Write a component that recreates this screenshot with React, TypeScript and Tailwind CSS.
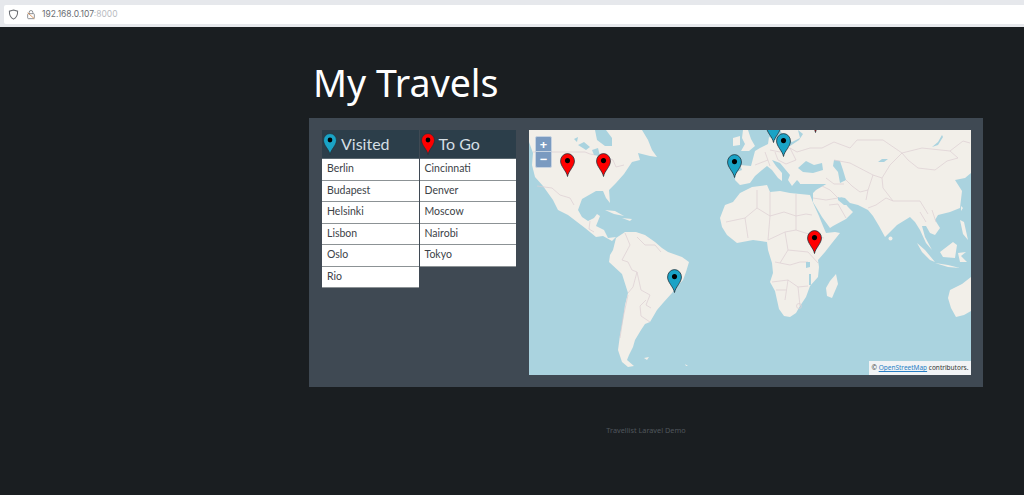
const visited = ["Berlin", "Budapest", "Helsinki", "Lisbon", "Oslo", "Rio"];
const toGo = ["Cincinnati", "Denver", "Moscow", "Nairobi", "Tokyo"];

// tip position in map coordinates
const pins = [
  { x: 38, y: 47, c: "#ff0000" },
  { x: 74, y: 47, c: "#ff0000" },
  { x: 205, y: 48, c: "#1aa3c6" },
  { x: 244, y: 13, c: "#1aa3c6" },
  { x: 254, y: 27, c: "#1aa3c6" },
  { x: 286, y: 3, c: "#ff0000" },
  { x: 285, y: 124, c: "#ff0000" },
  { x: 145, y: 163, c: "#1aa3c6" },
];

function Pin({ color, className, style }: { color: string; className?: string; style?: React.CSSProperties }) {
  return (
    <svg viewBox="0 0 16 24" preserveAspectRatio="none" className={className} style={style}>
      <path
        d="M8 23.5C7 18 .6 13.5.6 8A7.4 7.4 0 0 1 15.4 8C15.4 13.5 9 18 8 23.5Z"
        fill={color}
        stroke="#22313a"
        strokeWidth="0.8"
      />
      <circle cx="8" cy="7.6" r="2.7" fill="#000" />
    </svg>
  );
}

function MapArt() {
  const land = "#f2efe9";
  const water = "#aad3df";
  const border = "#dccfd2";
  return (
    <svg viewBox="529 130 442 245" className="block w-full h-full" preserveAspectRatio="none">
      <rect x="529" y="130" width="442" height="245" fill={water} />
      {/* North America */}
      <path
        fill={land}
        d="M529 130L595 130L597 140L605 146L612 146L612 138L606 130L642 130L648 140L652 150L657 157L650 156L638 153L640 160L632 162L624 174L616 183L609 190L610 203L606 198L603 191L596 191L582 199L578 210L582 217L588 221L594 218L597 214L600 216L596 226L604 230L608 238L616 237L612 241L603 236L596 237L585 228L568 215L558 210L553 200L548 193L543 186L535 177L532 165L533 153L529 142Z"
      />
      <path fill={land} d="M605 210L615 211L624 216L614 214ZM622 218L632 219L630 221Z" />
      {/* South America */}
      <path
        fill={land}
        d="M616 238L625 232L636 232L645 235L655 242L662 248L668 252L682 257L689 262L686 272L683 280L675 289L672 293L663 303L657 310L650 322L645 324L641 330L635 340L633 347L629 355L627 360L634 366L628 367L622 362L618 350L620 335L623 320L625 305L628 293L622 274L609 262L610 255L613 250Z"
      />
      <path fill={land} d="M644 358L649 357L647 360ZM685 364L688 366L686 366Z" />
      {/* Africa */}
      <path
        fill={land}
        d="M720 218L725 205L733 202L740 193L752 187L767 185L770 192L780 191L790 193L800 194L810 195L814 205L819 216L823 226L826 233L835 232L840 233L832 243L825 252L818 260L819 267L818 277L810 286L806 297L800 306L796 313L790 317L784 316L779 309L775 291L770 282L773 273L772 263L768 250L767 242L753 240L737 243L727 235L722 227Z"
      />
      {/* Madagascar */}
      <path fill={land} d="M836 274L838 284L832 298L827 296L826 288L830 281Z" />
      {/* UK, Ireland, Iceland */}
      <path fill={land} d="M743 130L748 130L751 139L755 146L749 151L741 151L745 144L742 138Z" />
      <path fill={land} d="M733 138L740 136L740 145L733 146Z" />
      {/* Eurasia */}
      <path
        fill={land}
        d="M768 130L971 130L971 173L965 178L955 180L962 191L960 208L950 212L938 215L935 220L940 228L935 235L930 233L926 226L922 226L925 237L932 250L926 243L920 230L915 222L910 217L897 225L885 237L879 226L873 216L868 210L858 205L850 203L845 198L840 197L848 207L853 212L846 219L833 226L830 228L822 217L813 202L813 193L816 190L828 183L800 183L797 180L792 186L788 180L790 175L780 163L772 160L776 166L782 173L782 181L778 178L772 170L767 166L762 170L755 176L750 183L740 185L735 180L736 172L742 170L740 165L751 166L755 151L760 148L768 144L769 137L776 140L784 137L780 130L798 130L800 138L792 142L786 139L782 140L790 146L799 140L803 134L798 130Z"
      />
      {/* Turkey and Black Sea */}
      <path fill={land} d="M797 173L822 173L830 178L828 184L800 184Z" />
      <path fill={water} d="M798 168L806 161L814 165L822 163L823 170L813 173L803 172Z" />
      {/* Caspian */}
      <path fill={water} d="M834 160L840 161L843 170L846 180L840 183L838 172L833 166Z" />
      {/* Persian Gulf */}
      <path fill={water} d="M838 197L844 199L850 205L844 205L838 200Z" />
      {/* Sri Lanka */}
      <circle cx="890.5" cy="238.5" r="2" fill={land} />
      {/* SE Asia */}
      <path
        fill={land}
        d="M917 243L925 250L935 262L930 260L922 252ZM935 263L948 265L960 268L948 267ZM940 252L953 242L957 245L955 258L943 257ZM958 253L966 252L961 256L967 262L960 262ZM960 220L964 222L968 240L963 234ZM961 206L963 208L961 211Z"
      />
      {/* Australia */}
      <path fill={land} d="M971 277L962 284L950 290L948 298L951 308L956 317L964 315L971 311Z" />
      {/* Borders */}
      <g fill="none" stroke={border} strokeWidth="0.7">
        <path d="M533 152L585 152L590 154L602 156L613 160L616 167L624 165" />
        <path d="M537 186L552 188L560 195L570 198L574 205" />
        <path d="M590 221L589 229L594 232" />
        <path d="M625 233L630 245L622 260L628 262L632 270L637 272L641 290L650 295L646 305L651 308" />
        <path d="M637 237L645 245L655 245L661 252" />
        <path d="M628 293L633 287L637 272" />
        <path d="M623 318L628 295M620 338L623 318" />
        <path d="M646 300L640 306L641 316L650 322" />
        <path d="M726 222L745 218L757 208L770 216L784 212L796 216L806 214L812 215" />
        <path d="M745 218L748 238M770 192L770 216L768 240M796 194L796 230M757 190L757 208" />
        <path d="M768 240L785 232L796 230L815 236L824 238M785 232L788 250L780 263" />
        <path d="M775 262L790 265L800 262L808 262M788 250L808 252L818 263" />
        <path d="M772 282L788 280L798 287L808 286M788 280L785 300M798 287L800 306" />
        <path d="M776 290L786 290" />
        <path d="M770 150L780 152L790 148L797 152L810 148L822 148L834 142L850 148L857 140L883 140L902 153L922 148L950 151L963 141L970 143" />
        <path d="M834 160L850 163L873 175L882 178L890 165L902 153" />
        <path d="M950 151L958 158L947 161L935 170L918 168L908 160L902 153" />
        <path d="M882 178L883 188L893 201L920 201L928 214M893 201L886 198L876 205L868 208" />
        <path d="M873 175L868 190L860 192L852 186L846 180M868 190L866 200" />
        <path d="M826 178L834 184L844 184M822 186L830 190L838 198M813 198L826 200L838 198" />
        <path d="M775 152L778 160L786 164L796 160M790 148L796 160M765 152L770 166M755 165L768 160" />
        <path d="M829 205L838 204L846 218" />
        <path d="M920 212L926 222M932 210L936 222" />
      </g>
      {/* Lakes */}
      <g fill={water}>
        <path d="M578 145L584 142L590 147L586 150ZM592 150L598 148L600 156L594 155ZM574 139L578 137L577 142Z" />
        <path d="M806 262L810 262L810 267L806 268ZM809 274L811 274L811 285L809 285Z" />
        <path d="M932 147L938 142L942 135L943 137L938 145ZM878 162L882 159L888 159L884 162Z" />
      </g>
      <circle cx="799" cy="306" r="2.5" fill="none" stroke={border} strokeWidth="0.7" />
    </svg>
  );
}

function ListColumn({ title, color, items }: { title: string; color: string; items: string[] }) {
  return (
    <div className="w-[96.5px] flex flex-col" style={{ fontFamily: '"Lato", sans-serif' }}>
      <div className="h-[29px] bg-[#2c3e4a] flex items-center pl-[1px] pb-[1px] border-b border-[#5b6870]">
        <Pin color={color} className="w-[14px] h-[22px] shrink-0" />
        <span className="ml-[4px] text-[16px] text-[#d5dee4] leading-none">{title}</span>
      </div>
      {items.map((item) => (
        <div
          key={item}
          className="h-[21.5px] bg-white border-b border-[#8c9295] pl-[5px] flex items-center text-[10.5px] text-[#3c4247]"
        >
          {item}
        </div>
      ))}
    </div>
  );
}

export default function App() {
  return (
    <div
      className="w-[1024px] h-[495px] overflow-hidden bg-[#1a1e21] flex flex-col"
      style={{ fontFamily: '"Noto Sans", "Open Sans", sans-serif' }}
    >
      <div className="h-[27px] bg-[#e6e8ec] pt-[5px] pl-[4px] shrink-0">
        <div className="h-[19px] bg-white rounded-l-[2px] flex items-center pl-[4px]">
          <svg viewBox="0 0 12 12" className="w-[11px] h-[11px]" fill="none" stroke="#6a6d72" strokeWidth="1.1">
            <path d="M6 1L10.5 2.4C10.6 6.5 9.2 9.5 6 11C2.8 9.5 1.4 6.5 1.5 2.4Z" />
          </svg>
          <svg viewBox="0 0 12 12" className="w-[10px] h-[11px] ml-[7px]" fill="none" stroke="#7a7d82" strokeWidth="1">
            <path d="M3.8 5V3.4a2.2 2.2 0 0 1 4.4 0V5" />
            <rect x="2" y="5" width="8" height="6" rx="1" />
            <path d="M2 4L10 11" stroke="#d98a4a" />
          </svg>
          <span className="ml-[6px] text-[8.5px] text-[#6b6e73]" style={{ fontFamily: '"Inter", sans-serif' }}>
            192.168.0.107<span className="text-[#b9bbbf]">:8000</span>
          </span>
        </div>
      </div>

      <div className="ml-[309px] w-[674px] flex flex-col">
        <h1 className="h-[91px] pl-[4px] pt-[30px] text-[37.5px] leading-[52px] text-white">My Travels</h1>
        <div className="h-[269px] bg-[#3f4953] flex pl-[13px] pt-[12px]">
          <ListColumn title="Visited" color="#1aa3c6" items={visited} />
          <div className="ml-[1px]">
            <ListColumn title="To Go" color="#ff0000" items={toGo} />
          </div>
          <div className="relative w-[442px] h-[245px] ml-[13px] overflow-hidden">
            <MapArt />
            <div className="absolute left-[6px] top-[6px] w-[17px] rounded-[2px] border border-[#c6d2e0] bg-[#7a9ac0] flex flex-col text-white font-bold">
              <div className="h-[15px] flex items-center justify-center text-[13px] leading-none border-b border-[#c6d2e0]">+</div>
              <div className="h-[15px] flex items-center justify-center text-[13px] leading-none">−</div>
            </div>
            {pins.map((p, i) => (
              <Pin
                key={i}
                color={p.c}
                className="absolute w-[15px] h-[24px]"
                style={{ left: p.x - 7.5, top: p.y - 24 }}
              />
            ))}
            <div className="absolute right-0 bottom-0 h-[14px] w-[102px] bg-[#f1f3f5] flex items-center justify-center text-[6.5px] text-[#333]">
              ©&nbsp;<span className="text-[#2a7fc4] underline">OpenStreetMap</span>&nbsp;contributors.
            </div>
          </div>
        </div>
        <div className="mt-[38px] text-center text-[7.3px] text-[#50565c]">Travellist Laravel Demo</div>
      </div>
    </div>
  );
}
